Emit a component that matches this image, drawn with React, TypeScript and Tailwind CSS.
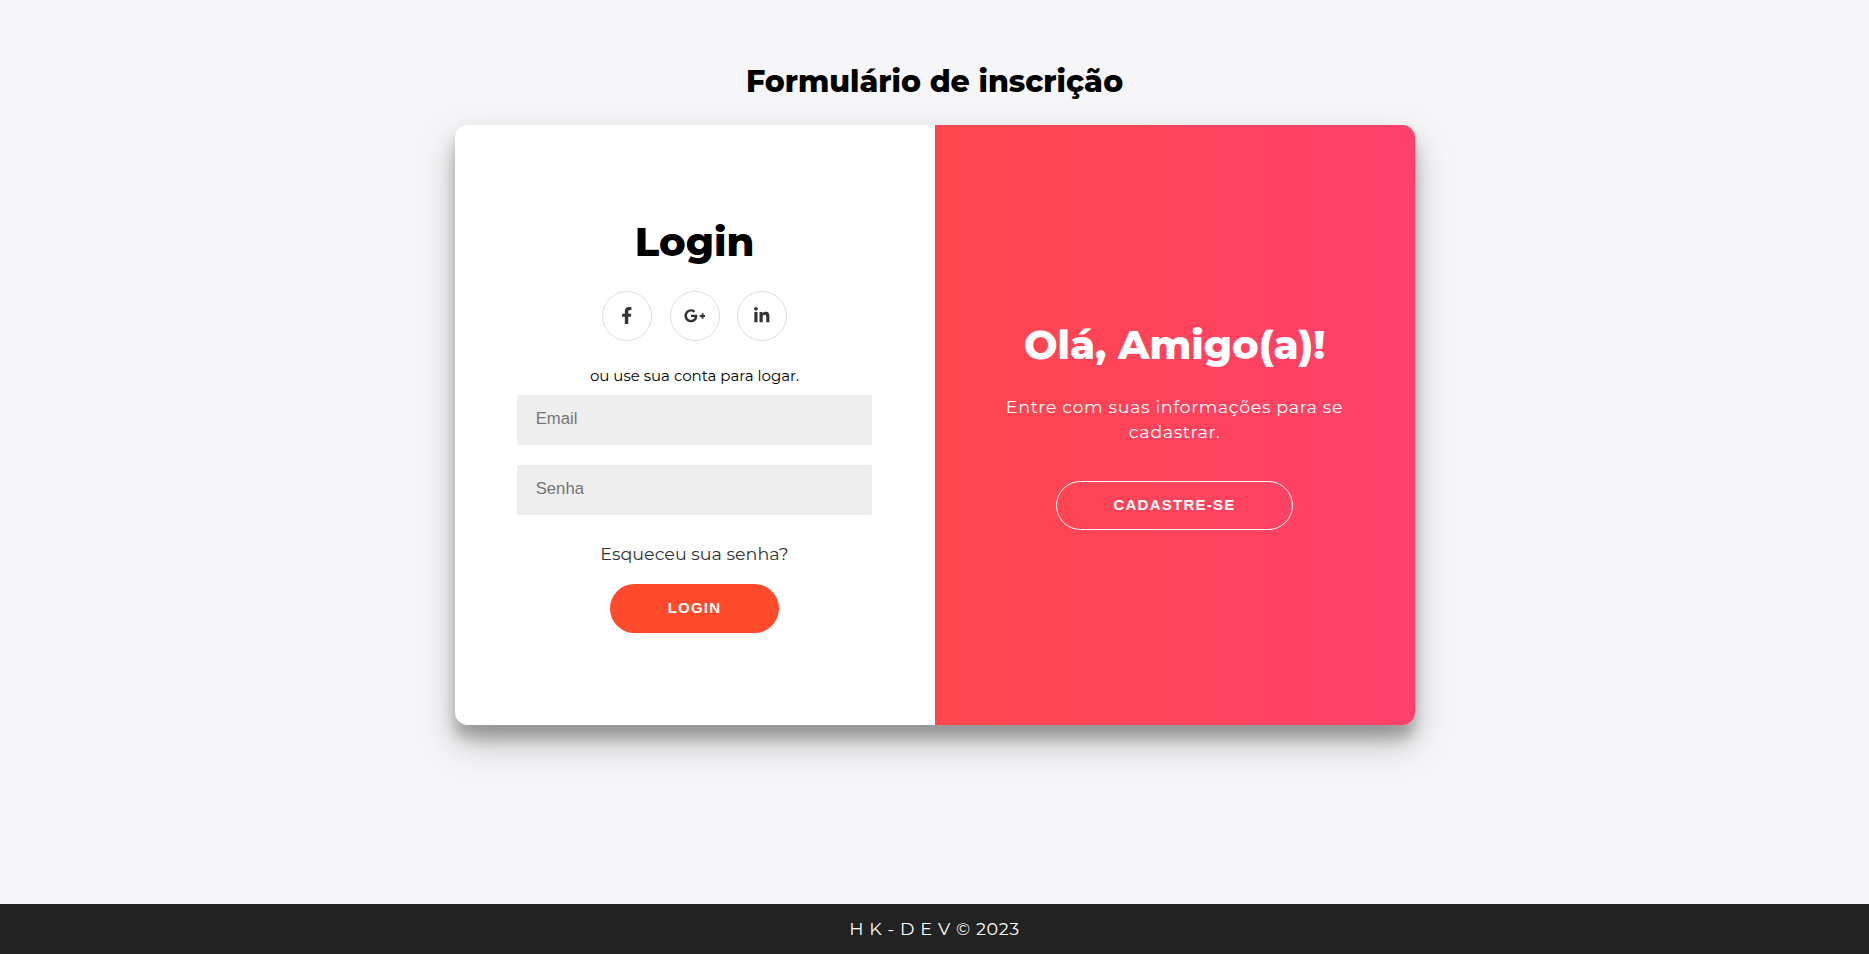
import type { ReactNode } from "react";
import { FaFacebookF, FaGooglePlusG, FaLinkedinIn } from "react-icons/fa";

function SocialLink({ label, children }: { label: string; children: ReactNode }) {
  return (
    <a
      href="#"
      aria-label={label}
      className="flex size-[50px] items-center justify-center rounded-full border border-[#ddd] pb-px text-[17.5px] text-[#333]"
    >
      {children}
    </a>
  );
}

function Field({ type, placeholder }: { type: string; placeholder: string }) {
  return (
    <input
      type={type}
      placeholder={placeholder}
      className="h-[50px] w-[355px] rounded-[2px] bg-[#eee] px-[18.75px] pb-0.5 font-['Liberation_Sans',Arial,sans-serif] text-[16.67px] outline-none placeholder:text-[#757575]"
    />
  );
}

export default function App() {
  return (
    <div className="flex h-[954px] w-full flex-col overflow-hidden bg-[#f6f5f7] font-['Montserrat',Inter,sans-serif] text-black">
      <h1 className="h-[125px] shrink-0 pt-[61px] text-center text-[30px] leading-[41px] font-extrabold">
        Formulário de inscrição
      </h1>

      <main className="mx-auto flex h-[600px] w-[960px] shrink-0 overflow-hidden rounded-[12.5px] bg-white shadow-[0_17.5px_35px_rgba(0,0,0,0.25),0_12.5px_12.5px_rgba(0,0,0,0.22)]">
        <form className="flex w-1/2 flex-col items-center pt-[93px]">
          <h2 className="text-[40px] leading-[48px] font-extrabold">Login</h2>
          <div className="mt-[25px] flex gap-[17.5px]">
            <SocialLink label="Facebook">
              <FaFacebookF />
            </SocialLink>
            <SocialLink label="Google Plus">
              <FaGooglePlusG className="h-[17.5px] w-[21.875px]" />
            </SocialLink>
            <SocialLink label="LinkedIn">
              <FaLinkedinIn />
            </SocialLink>
          </div>
          <p className="mt-[25px] text-[15px] leading-5">ou use sua conta para logar.</p>
          <div className="mt-[9px] flex flex-col gap-5">
            <Field type="email" placeholder="Email" />
            <Field type="password" placeholder="Senha" />
          </div>
          <a href="#" className="mt-[27px] text-[17.5px] leading-6 text-[#333]">
            Esqueceu sua senha?
          </a>
          <button
            type="button"
            className="mt-[18px] h-[49px] w-[169px] rounded-full bg-[#ff4b2b] font-['Liberation_Sans',Arial,sans-serif] text-[15px] font-bold tracking-[1.25px] text-white"
          >
            LOGIN
          </button>
        </form>

        <section className="flex w-1/2 flex-col items-center bg-[linear-gradient(to_right,#ff464c,#ff416c)] pt-[196px] text-white">
          <h2 className="text-[40px] leading-[48px] font-extrabold">Olá, Amigo(a)!</h2>
          <p className="mt-[25px] w-[380px] text-center text-[17.5px] leading-[25px] font-normal tracking-[0.625px]">
            Entre com suas informações para se cadastrar.
          </p>
          <button
            type="button"
            className="mt-[37px] h-[49px] w-[237px] rounded-full border border-white font-['Liberation_Sans',Arial,sans-serif] text-[15px] font-bold tracking-[1.25px]"
          >
            CADASTRE-SE
          </button>
        </section>
      </main>

      <footer className="mt-auto flex h-[50px] shrink-0 items-center justify-center bg-[#222] text-[17.5px] tracking-[0.625px] text-white">
        <p className="whitespace-pre">H K - D E V © 2023</p>
      </footer>
    </div>
  );
}
